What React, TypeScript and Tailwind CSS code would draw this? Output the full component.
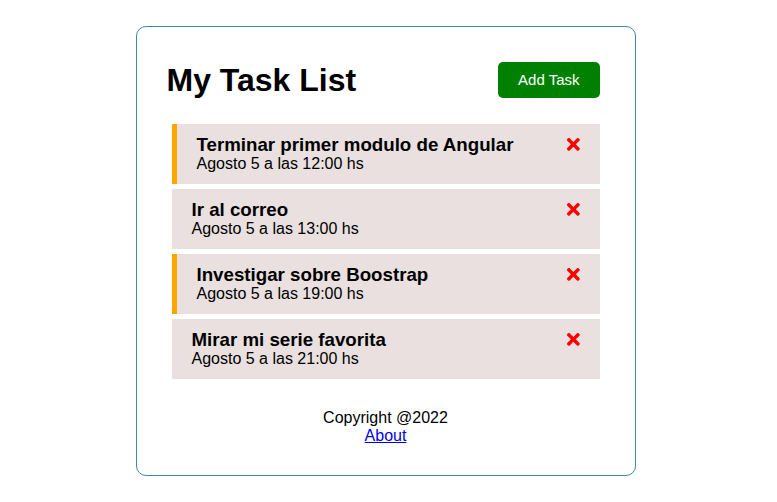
import React from "react";
import { FaTimes } from "react-icons/fa";

type Task = { id: number; text: string; day: string; reminder: boolean };

const tasks: Task[] = [
  { id: 1, text: "Terminar primer modulo de Angular", day: "Agosto 5 a las 12:00 hs", reminder: true },
  { id: 2, text: "Ir al correo", day: "Agosto 5 a las 13:00 hs", reminder: false },
  { id: 3, text: "Investigar sobre Boostrap", day: "Agosto 5 a las 19:00 hs", reminder: true },
  { id: 4, text: "Mirar mi serie favorita", day: "Agosto 5 a las 21:00 hs", reminder: false },
];

export default function App() {
  return (
    <div className="min-h-[502px] bg-white pt-[26px] pr-[6px] text-black" style={{ fontFamily: '"Liberation Sans", Arial, sans-serif' }}>
      <div className="mx-auto w-[500px] min-h-[300px] rounded-[10px] border border-[#4682b4] p-[30px]">
        <header className="mb-[21px] flex items-center justify-between">
          <h1 className="text-[32px] font-bold leading-[37px]">My Task List</h1>
          <button className="m-[5px] h-[36px] rounded-[5px] bg-[#008000] px-[20px] text-[15px] text-white">
            Add Task
          </button>
        </header>
        <div className="flex flex-col gap-[5px] px-[5px]">
          {tasks.map((t) => (
            <div
              key={t.id}
              className={
                t.reminder
                  ? "h-[60px] border-l-[5px] border-[#ffa500] bg-[#e9e0df] px-[20px] py-[10px]"
                  : "h-[60px] bg-[#e9e0df] px-[20px] py-[10px]"
              }
            >
              <h3 className="flex items-center justify-between text-[18.72px] font-bold leading-[21px]">
                {t.text}
                <FaTimes className="-mr-[3px] text-[#ff0000]" />
              </h3>
              <p className="text-[16px] leading-[18px]">{t.day}</p>
            </div>
          ))}
        </div>
        <footer className="mt-[30px] text-center text-[16px] leading-[18px]">
          <p>Copyright @2022</p>
          <a href="#" className="text-[#0000ee] underline">About</a>
        </footer>
      </div>
    </div>
  );
}
